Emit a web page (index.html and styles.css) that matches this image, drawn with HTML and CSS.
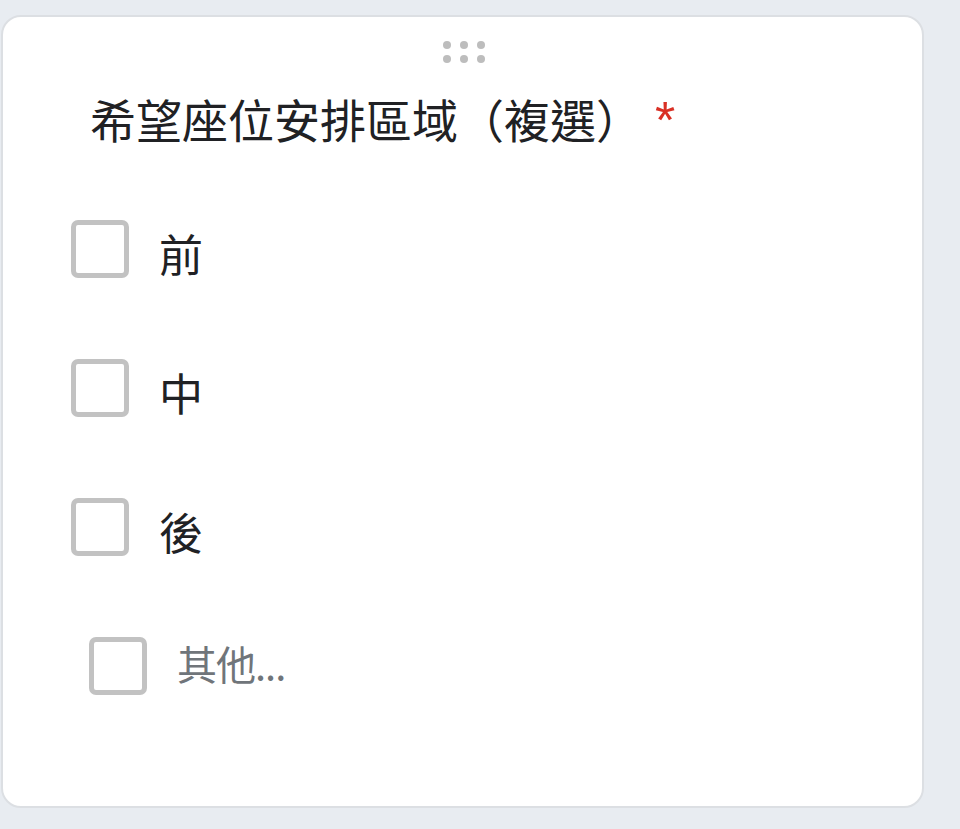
FILE: index.html
```html
<!DOCTYPE html>
<html lang="zh-Hant">
<head>
<meta charset="utf-8">
<link rel="stylesheet" href="styles.css">
</head>
<body>
<div class="card">
  <div class="handle">
    <span></span><span></span><span></span>
    <span></span><span></span><span></span>
  </div>
  <div class="title">希望座位安排區域（複選）<span class="req">*</span></div>
  <div class="options">
    <div class="opt"><span class="box"></span><span class="label">前</span></div>
    <div class="opt"><span class="box"></span><span class="label">中</span></div>
    <div class="opt"><span class="box"></span><span class="label">後</span></div>
    <div class="opt other"><span class="box"></span><span class="label">其他...</span></div>
  </div>
</div>
</body>
</html>
```
FILE: styles.css
```css
html, body {
  margin: 0;
  padding: 0;
  background: #e8ecf1;
}
body {
  font-family: "Noto Sans CJK TC", "Noto Sans", sans-serif;
  color: #202124;
  overflow: hidden;
  height: 829px;
}
.card {
  box-sizing: border-box;
  width: 923px;
  height: 793px;
  margin: 15px 0 0 1px;
  background: #fff;
  border: 2px solid #dcdfe3;
  border-radius: 20px;
  padding-top: 24px;
}
.handle {
  width: 42px;
  margin: 0 auto;
  display: grid;
  grid-template-columns: repeat(3, 8px);
  grid-template-rows: repeat(2, 8px);
  column-gap: 9px;
  row-gap: 6px;
  justify-content: center;
  position: relative;
  left: 1px;
}
.handle span {
  width: 8px;
  height: 8px;
  border-radius: 50%;
  background: #bdbdbd;
}
.title {
  margin-top: 25px;
  padding-left: 87px;
  font-size: 46px;
  line-height: 60px;
  height: 60px;
  white-space: nowrap;
}
.req {
  color: #d93025;
  margin-left: 13px;
  font-family: "Liberation Sans", sans-serif;
  font-size: 52px;
  line-height: 0;
  vertical-align: 0;
}
.options {
  margin-top: 72px;
  display: flex;
  flex-direction: column;
  gap: 81px;
}
.opt {
  display: flex;
  align-items: flex-start;
  height: 58px;
  padding-left: 68px;
}
.box {
  box-sizing: border-box;
  width: 58px;
  height: 58px;
  border: 5px solid #c2c2c2;
  border-radius: 7px;
  flex: none;
}
.label {
  margin-left: 30px;
  font-size: 44px;
  line-height: 58px;
  padding-top: 4px;
}
.other {
  padding-left: 86px;
}
.other .label {
  font-size: 40px;
  line-height: 52px;
  padding-top: 0;
  color: #70757a;
  letter-spacing: -1px;
}
```
